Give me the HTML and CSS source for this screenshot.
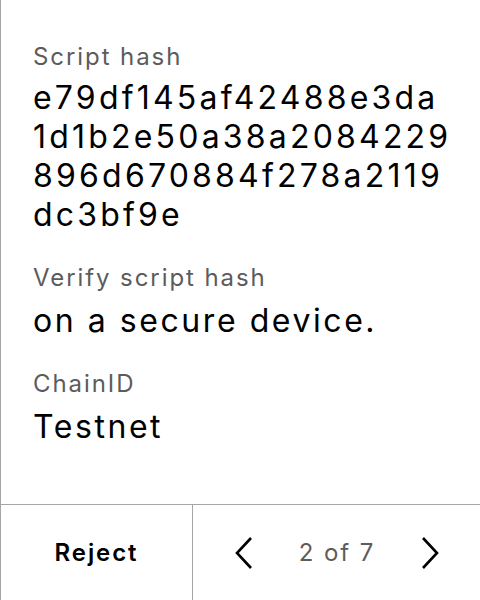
FILE: index.html
```html
<!DOCTYPE html>
<html>
<head>
<meta charset="utf-8">
<link rel="stylesheet" href="styles.css">
</head>
<body>
<div class="screen">
  <div class="content">
    <div class="field">
      <div class="label">Script hash</div>
      <div class="value hash">e79df145af42488e3da<br>1d1b2e50a38a2084229<br>896d670884f278a2119<br>dc3bf9e</div>
    </div>
    <div class="field">
      <div class="label">Verify script hash</div>
      <div class="value">on a secure device.</div>
    </div>
    <div class="field">
      <div class="label">ChainID</div>
      <div class="value">Testnet</div>
    </div>
  </div>
  <div class="footer">
    <div class="reject">Reject</div>
    <div class="nav">
      <svg class="chev" width="20" height="32" viewBox="0 0 20 32"><path d="M17 1 L3 16 L17 31" fill="none" stroke="#000" stroke-width="2.6"/></svg>
      <span class="page">2 of 7</span>
      <svg class="chev" width="20" height="32" viewBox="0 0 20 32"><path d="M3 1 L17 16 L3 31" fill="none" stroke="#000" stroke-width="2.6"/></svg>
    </div>
  </div>
</div>
</body>
</html>
```

FILE: styles.css
```css
html, body {
  margin: 0;
  padding: 0;
  background: #fff;
}
.screen {
  width: 480px;
  height: 600px;
  box-sizing: border-box;
  border-left: 1px solid #a6a6a6;
  display: flex;
  flex-direction: column;
  font-family: Inter, "Noto Sans", sans-serif;
  color: #000;
}
.content {
  flex: 1;
  padding: 41px 0 0 32px;
  display: flex;
  flex-direction: column;
  gap: 28px;
}
.label {
  font-size: 24px;
  line-height: 32px;
  color: #5c5c5c;
  letter-spacing: 0.08em;
}
.value {
  font-size: 32px;
  line-height: 39px;
  margin-top: 7px;
  letter-spacing: 0.08em;
}
.hash {
  margin-top: 5px;
  letter-spacing: 0.1em;
}
.footer {
  height: 96px;
  box-sizing: border-box;
  border-top: 1px solid #a6a6a6;
  display: flex;
}
.reject {
  width: 191px;
  border-right: 1px solid #a6a6a6;
  display: flex;
  align-items: center;
  justify-content: center;
  font-size: 24px;
  font-weight: 600;
  letter-spacing: 0.08em;
}
.nav {
  flex: 1;
  display: flex;
  align-items: center;
  justify-content: space-between;
  padding: 0 40px 0 41px;
}
.page {
  font-size: 24px;
  color: #5c5c5c;
  letter-spacing: 0.08em;
}
.chev {
  display: block;
}
```
